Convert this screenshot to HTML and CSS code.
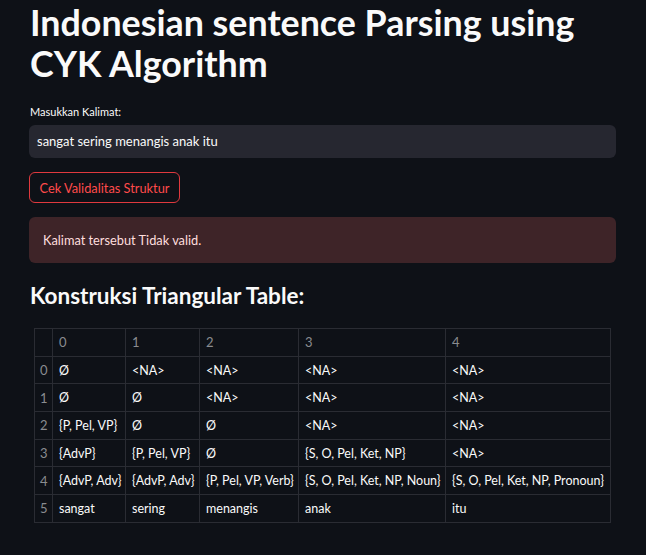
FILE: index.html
```html
<!DOCTYPE html>
<html>
<head>
<meta charset="utf-8">
<link rel="stylesheet" href="styles.css">
</head>
<body>
<main class="page">
  <h1 class="title">Indonesian sentence Parsing using CYK Algorithm</h1>
  <label class="label">Masukkan Kalimat:</label>
  <div class="input">sangat sering menangis anak itu</div>
  <button class="btn">Cek Validalitas Struktur</button>
  <div class="alert">Kalimat tersebut Tidak valid.</div>
  <h3 class="subtitle">Konstruksi Triangular Table:</h3>
  <table class="grid">
    <colgroup>
      <col class="c-idx"><col class="c0"><col class="c1"><col class="c2"><col class="c3"><col class="c4">
    </colgroup>
    <thead>
      <tr><th></th><th>0</th><th>1</th><th>2</th><th>3</th><th>4</th></tr>
    </thead>
    <tbody>
      <tr><th>0</th><td>Ø</td><td>&lt;NA&gt;</td><td>&lt;NA&gt;</td><td>&lt;NA&gt;</td><td>&lt;NA&gt;</td></tr>
      <tr><th>1</th><td>Ø</td><td>Ø</td><td>&lt;NA&gt;</td><td>&lt;NA&gt;</td><td>&lt;NA&gt;</td></tr>
      <tr><th>2</th><td>{P, Pel, VP}</td><td>Ø</td><td>Ø</td><td>&lt;NA&gt;</td><td>&lt;NA&gt;</td></tr>
      <tr><th>3</th><td>{AdvP}</td><td>{P, Pel, VP}</td><td>Ø</td><td>{S, O, Pel, Ket, NP}</td><td>&lt;NA&gt;</td></tr>
      <tr><th>4</th><td>{AdvP, Adv}</td><td>{AdvP, Adv}</td><td>{P, Pel, VP, Verb}</td><td>{S, O, Pel, Ket, NP, Noun}</td><td>{S, O, Pel, Ket, NP, Pronoun}</td></tr>
      <tr><th>5</th><td>sangat</td><td>sering</td><td>menangis</td><td>anak</td><td>itu</td></tr>
    </tbody>
  </table>
</main>
</body>
</html>
```

FILE: styles.css
```css
html, body {
  margin: 0;
  padding: 0;
  background: #0e1117;
  color: #fafafa;
  font-family: Lato, "Open Sans", sans-serif;
}
.page {
  display: flex;
  flex-direction: column;
  align-items: flex-start;
  padding: 2px 30px 0 29px;
  width: 587px;
}
.title {
  margin: 0;
  font-size: 35.8px;
  line-height: 41px;
  font-weight: 700;
  width: 580px;
  padding-left: 1px;
}
.label {
  margin-top: 21px;
  font-size: 11px;
  line-height: 14px;
  padding-left: 1px;
}
.input {
  margin-top: 6px;
  box-sizing: border-box;
  width: 587px;
  height: 33px;
  background: #262730;
  border-radius: 6px;
  padding: 0 8px;
  font-size: 13px;
  line-height: 33px;
  color: #fafafa;
}
.btn {
  margin-top: 14px;
  box-sizing: border-box;
  width: 151px;
  height: 31px;
  background: transparent;
  border: 1px solid #e0393e;
  border-radius: 6px;
  color: #ff4b4b;
  font-family: inherit;
  font-size: 12.8px;
  padding: 0;
}
.alert {
  margin-top: 14px;
  box-sizing: border-box;
  width: 587px;
  height: 46px;
  background: #3e2428;
  border-radius: 6px;
  padding: 0 14px;
  font-size: 12.8px;
  line-height: 46px;
  color: #ffdede;
}
.subtitle {
  margin: 20px 0 0 1px;
  font-size: 22.5px;
  line-height: 26px;
  font-weight: 700;
}
.grid {
  margin-top: 19px;
  margin-left: 5px;
  border-collapse: collapse;
  table-layout: fixed;
  width: 576px;
  font-size: 12.5px;
}
.c-idx { width: 18px; }
.c0 { width: 73px; }
.c1 { width: 74px; }
.c2 { width: 99px; }
.c3 { width: 147px; }
.c4 { width: 165px; }
.grid th, .grid td {
  border: 1px solid #2a2c33;
  height: 26.7px;
  padding: 0 0 0 6px;
  text-align: left;
  font-weight: 400;
  white-space: nowrap;
  overflow: hidden;
}
.grid thead th {
  color: #8a8c90;
  font-size: 13px;
}
.grid tbody th {
  color: #8a8c90;
  padding-left: 5px;
  font-size: 13px;
}
.grid td {
  color: #fafafa;
}
```
